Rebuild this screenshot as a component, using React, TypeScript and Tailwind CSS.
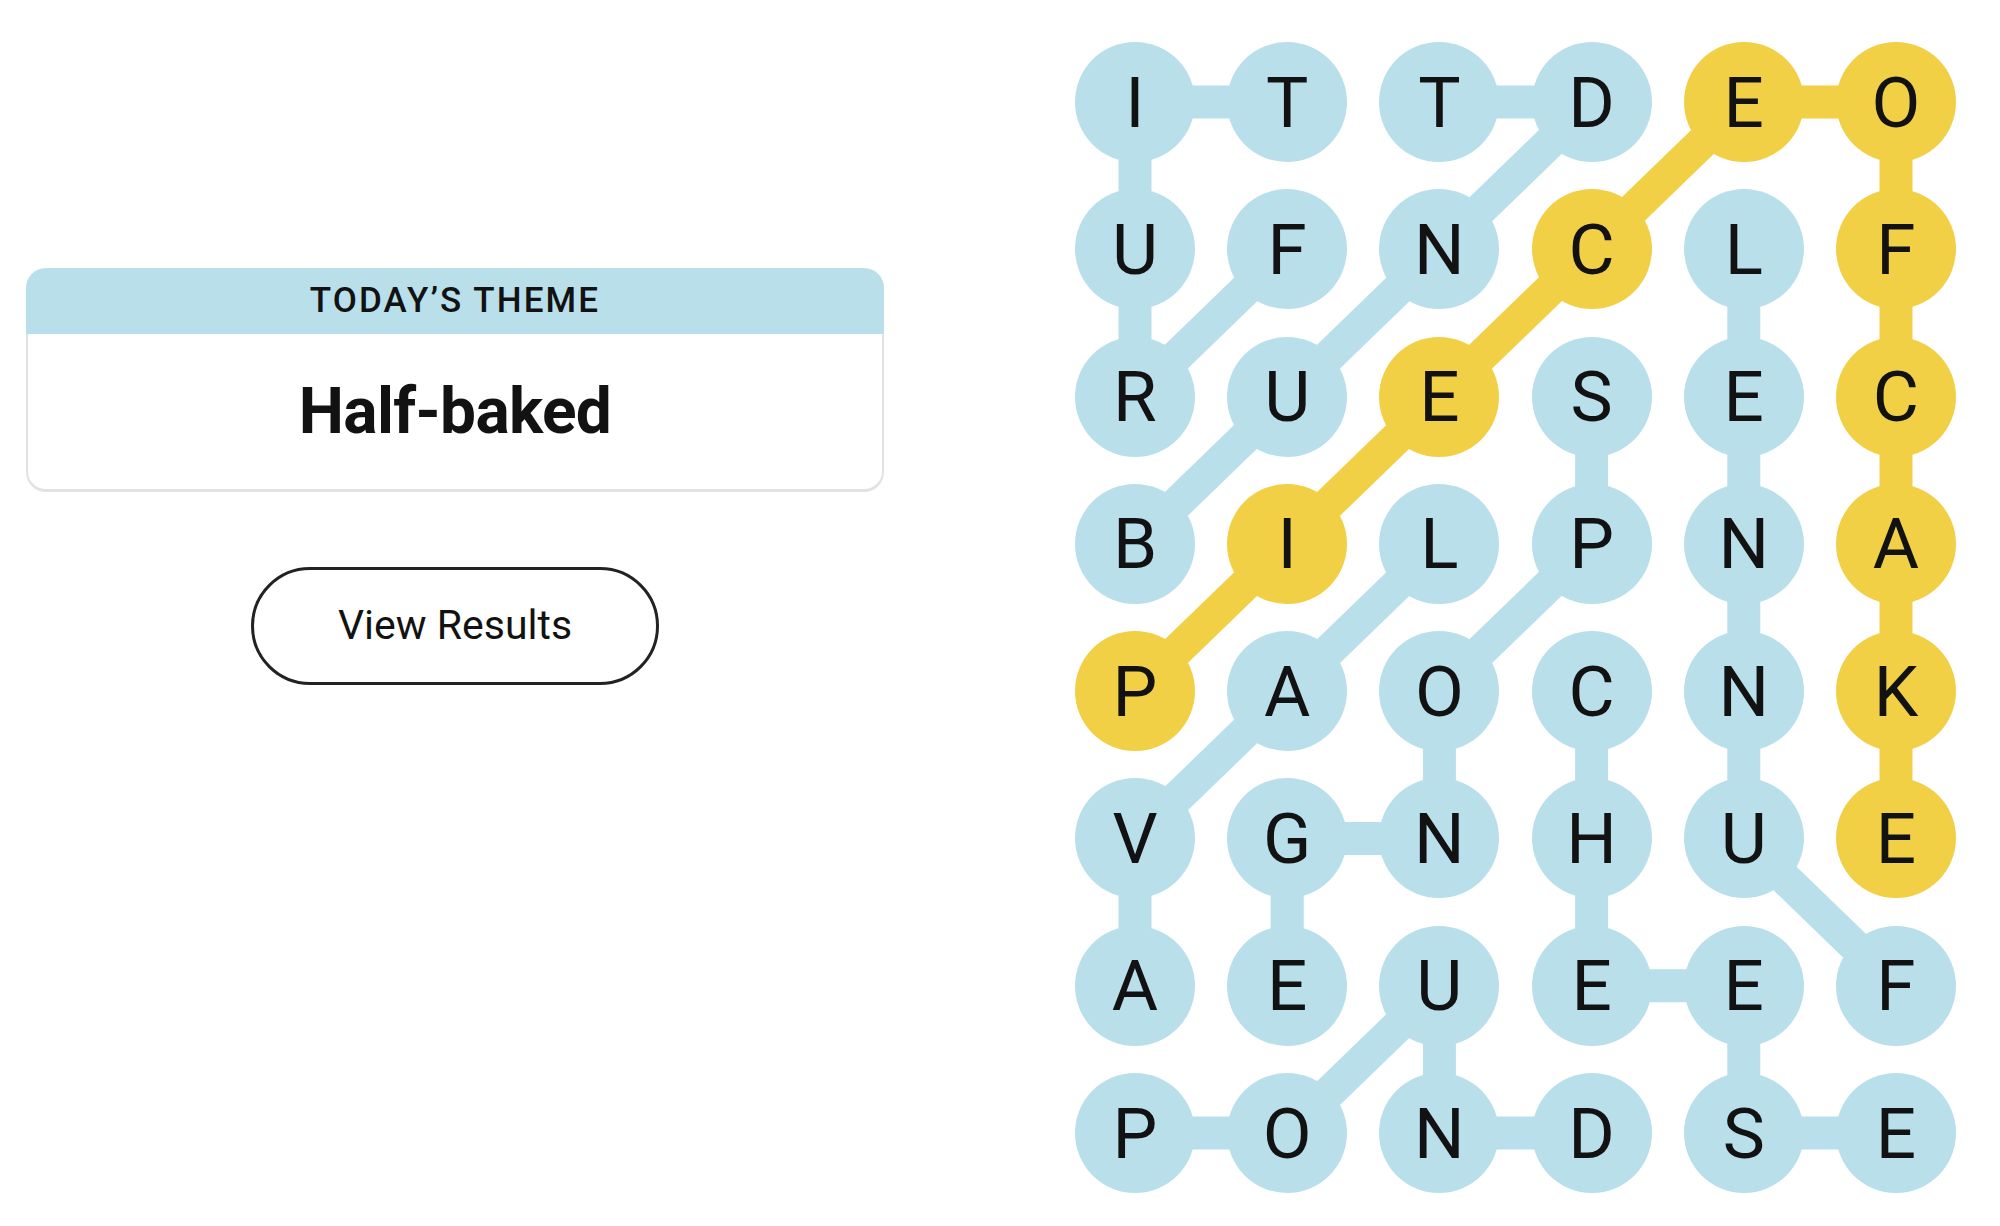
import React from 'react'

const ROWS = [
  'ITTDEO',
  'UFNCLF',
  'RUESEC',
  'BILPNA',
  'PAOCNK',
  'VGNHUE',
  'AEUEEF',
  'PONDSE',
]

// cells of the spangram (PIECE OF CAKE)
const YELLOW_CELLS: [number, number][] = [
  [4, 0], [3, 1], [2, 2], [1, 3], [0, 4], [0, 5], [1, 5], [2, 5], [3, 5], [4, 5], [5, 5],
]

type Link = [[number, number], [number, number]]

const BLUE_LINKS: Link[] = [
  // FRUIT
  [[0, 0], [0, 1]], [[0, 0], [1, 0]], [[1, 0], [2, 0]], [[2, 0], [1, 1]],
  // BUNDT
  [[0, 2], [0, 3]], [[0, 3], [1, 2]], [[1, 2], [2, 1]], [[2, 1], [3, 0]],
  // FUNNEL
  [[1, 4], [2, 4]], [[2, 4], [3, 4]], [[3, 4], [4, 4]], [[4, 4], [5, 4]], [[5, 4], [6, 5]],
  // LAVA
  [[3, 2], [4, 1]], [[4, 1], [5, 0]], [[5, 0], [6, 0]],
  // SPONGE
  [[2, 3], [3, 3]], [[3, 3], [4, 2]], [[4, 2], [5, 2]], [[5, 2], [5, 1]], [[5, 1], [6, 1]],
  // CHEESE
  [[4, 3], [5, 3]], [[5, 3], [6, 3]], [[6, 3], [6, 4]], [[6, 4], [7, 4]], [[7, 4], [7, 5]],
  // POUND
  [[7, 0], [7, 1]], [[7, 1], [6, 2]], [[6, 2], [7, 2]], [[7, 2], [7, 3]],
]

const YELLOW_LINKS: Link[] = YELLOW_CELLS.slice(1).map((cell, i) => [YELLOW_CELLS[i], cell])

const COL_STEP = 152.2
const ROW_STEP = 147.3
const SIZE = 120

const center = ([r, c]: [number, number]) => ({
  x: SIZE / 2 + c * COL_STEP,
  y: SIZE / 2 + r * ROW_STEP,
})

const isYellow = (r: number, c: number) => YELLOW_CELLS.some(([yr, yc]) => yr === r && yc === c)

const ThemeCard: React.FC = () => (
  <div className="w-[858px]">
    <div className="h-[66px] bg-[#b9dfea] rounded-t-[20px] flex items-center justify-center">
      <span className="text-[35px] font-medium tracking-[0.06em] text-[#121212] uppercase">
        Today’s Theme
      </span>
    </div>
    <div className="h-[158px] rounded-b-[20px] border-x-2 border-b-[3px] border-[#e2e2e2] bg-white flex items-center justify-center">
      <span className="text-[64px] font-bold tracking-[-0.01em] text-[#121212]">Half-baked</span>
    </div>
  </div>
)

const Board: React.FC = () => {
  const width = SIZE + 5 * COL_STEP
  const height = SIZE + 7 * ROW_STEP

  return (
    <div className="relative" style={{ width, height }}>
      <svg className="absolute inset-0" width={width} height={height}>
        {[...BLUE_LINKS.map((l) => ({ l, color: '#b9dfea' })), ...YELLOW_LINKS.map((l) => ({ l, color: '#f1d046' }))].map(
          ({ l, color }, i) => {
            const a = center(l[0])
            const b = center(l[1])
            return <line key={i} x1={a.x} y1={a.y} x2={b.x} y2={b.y} stroke={color} strokeWidth={33} />
          }
        )}
      </svg>
      <div className="relative grid grid-cols-[repeat(6,120px)] gap-x-[32.2px] gap-y-[27.3px]">
        {ROWS.map((row, r) =>
          row.split('').map((letter, c) => (
            <div
              key={`${r}-${c}`}
              className={`w-[120px] h-[120px] rounded-full flex items-center justify-center text-[71px] font-normal text-[#121212] ${
                isYellow(r, c) ? 'bg-[#f1d046]' : 'bg-[#b9dfea]'
              }`}
            >
              <span className="leading-none">{letter}</span>
            </div>
          ))
        )}
      </div>
    </div>
  )
}

export default function App() {
  return (
    <div className="w-[2000px] h-[1226px] bg-white flex font-['Roboto','Liberation_Sans',sans-serif]">
      <div className="pl-[26px] pt-[268px] flex flex-col items-center">
        <ThemeCard />
        <button className="mt-[75px] w-[408px] h-[118px] rounded-full border-[3px] border-[#222] text-[41px] text-[#121212] bg-white">
          View Results
        </button>
      </div>
      <div className="ml-[191px] mt-[42px]">
        <Board />
      </div>
    </div>
  )
}
